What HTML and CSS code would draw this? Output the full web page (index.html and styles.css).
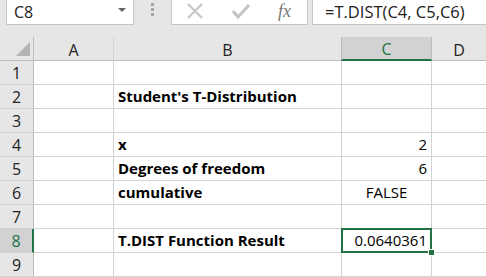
FILE: index.html
```html
<!DOCTYPE html>
<html lang="en">

<head>
    <meta charset="UTF-8">
    <title>T.DIST</title>
    <link rel="stylesheet" href="styles.css">
</head>

<body>
    <div class="formula-bar">
        <div class="name-box">
            <span>C8</span>
            <span class="drop"></span>
        </div>
        <div class="grip"><i></i><i></i><i></i></div>
        <div class="buttons">
            <svg class="btn" width="18" height="16" viewBox="0 0 18 16"><path d="M2 1 L16 15 M16 1 L2 15" stroke="#c4c4c4" stroke-width="2" fill="none"/></svg>
            <svg class="btn" width="18" height="16" viewBox="0 0 18 16"><path d="M1 8 L6 14 L17 2" stroke="#c4c4c4" stroke-width="3" fill="none"/></svg>
            <span class="fx">fx</span>
        </div>
        <div class="formula">=T.DIST(C4, C5,C6)</div>
    </div>

    <div class="sheet">
        <div class="hd corner"><span class="tri"></span></div>
        <div class="hd col">A</div>
        <div class="hd col">B</div>
        <div class="hd col sel">C</div>
        <div class="hd col last">D</div>

        <div class="hd row">1</div><div class="c"></div><div class="c"></div><div class="c"></div><div class="c last"></div>
        <div class="hd row">2</div><div class="c"></div><div class="c b">Student's T-Distribution</div><div class="c"></div><div class="c last"></div>
        <div class="hd row">3</div><div class="c"></div><div class="c"></div><div class="c"></div><div class="c last"></div>
        <div class="hd row">4</div><div class="c"></div><div class="c b">x</div><div class="c num">2</div><div class="c last"></div>
        <div class="hd row">5</div><div class="c"></div><div class="c b">Degrees of freedom</div><div class="c num">6</div><div class="c last"></div>
        <div class="hd row">6</div><div class="c"></div><div class="c b">cumulative</div><div class="c mid">FALSE</div><div class="c last"></div>
        <div class="hd row">7</div><div class="c"></div><div class="c"></div><div class="c"></div><div class="c last"></div>
        <div class="hd row sel">8</div><div class="c"></div><div class="c b">T.DIST Function Result</div><div class="c num active">0.0640361</div><div class="c last"></div>
        <div class="hd row">9</div><div class="c"></div><div class="c"></div><div class="c"></div><div class="c last"></div>
    </div>
</body>

</html>
```

FILE: styles.css
```css
body {
    margin: 0;
    width: 486px;
    height: 277px;
    overflow: hidden;
    background-color: #e6e6e6;
    font-family: 'Segoe UI', 'Open Sans', sans-serif;
}

/* Formula bar */
.formula-bar {
    display: flex;
    height: 25px;
    margin-bottom: 12px;
}

.name-box {
    display: flex;
    align-items: center;
    justify-content: space-between;
    box-sizing: border-box;
    width: 128px;
    margin-left: 6px;
    padding: 0 7px 1px 7px;
    background-color: #fff;
    border: 1px solid #c6c6c6;
    border-top: none;
    font-size: 16px;
    color: #222;
}

.drop {
    width: 0;
    height: 0;
    border-left: 4px solid transparent;
    border-right: 4px solid transparent;
    border-top: 4px solid #666;
    margin-bottom: 3px;
}

.grip {
    display: flex;
    flex-direction: column;
    gap: 2px;
    width: 37px;
    align-items: center;
    padding-top: 3px;
}

.grip i {
    width: 3px;
    height: 3px;
    background-color: #a6a6a6;
}

.buttons {
    display: flex;
    align-items: center;
    box-sizing: border-box;
    width: 137px;
    padding: 0 0 2px 14px;
    gap: 28px;
    background-color: #fff;
    border: 1px solid #c6c6c6;
    border-top: none;
}

.fx {
    font-family: 'Liberation Serif', serif;
    font-style: italic;
    font-size: 18px;
    color: #7a7a7a;
}

.formula {
    flex: 1;
    margin-left: 4px;
    padding: 0 0 1px 12px;
    display: flex;
    align-items: center;
    background-color: #fff;
    border: 1px solid #c6c6c6;
    border-top: none;
    border-right: none;
    font-size: 16.5px;
    color: #222;
}

/* Sheet grid */
.sheet {
    display: grid;
    grid-template-columns: 34px 80px 228px 90px 1fr;
    grid-template-rows: 24px repeat(9, 24px);
    background-color: #fff;
}

.hd {
    box-sizing: border-box;
    background-color: #e6e6e6;
    display: flex;
    align-items: center;
    justify-content: center;
    font-size: 16px;
    color: #222;
    border-right: 1px solid #bdbdbd;
    border-bottom: 1px solid #bdbdbd;
}

.hd.col {
    border-right-color: #d4d4d4;
    padding-top: 2px;
}

.hd.last {
    border-right: none;
}

.hd.row {
    padding-top: 1px;
    border-bottom-color: #d4d4d4;
    border-right-color: #bdbdbd;
}

.hd.sel {
    background-color: #d2d2d2;
    color: #217346;
}

.hd.col.sel {
    border-bottom: 2px solid #217346;
    border-right-color: #bdbdbd;
    border-left: 1px solid #bdbdbd;
    margin-left: -1px;
}

.hd.row.sel {
    border-right: 2px solid #217346;
}

.corner {
    justify-content: flex-end;
    align-items: flex-end;
    padding: 0 3px 4px 0;
}

.tri {
    width: 0;
    height: 0;
    border-left: 14px solid transparent;
    border-bottom: 14px solid #b4b4b4;
}

.c {
    box-sizing: border-box;
    display: flex;
    align-items: flex-end;
    padding: 0 4px 2px 4px;
    border-right: 1px solid #d4d4d4;
    border-bottom: 1px solid #d4d4d4;
    font-family: 'Open Sans', sans-serif;
    font-size: 15px;
    color: #000;
    white-space: nowrap;
}

.c.last {
    border-right: none;
}

.c.b {
    font-weight: bold;
}

.c.num {
    justify-content: flex-end;
}

.c.mid {
    justify-content: center;
}

.c.active {
    position: relative;
}

.c.active::before {
    content: '';
    position: absolute;
    left: -1px;
    top: -1px;
    right: -1px;
    bottom: -1px;
    border: 2px solid #217346;
}

.c.active::after {
    content: '';
    position: absolute;
    right: -4px;
    bottom: -4px;
    width: 5px;
    height: 5px;
    background-color: #217346;
    border: 1px solid #fff;
}
```
